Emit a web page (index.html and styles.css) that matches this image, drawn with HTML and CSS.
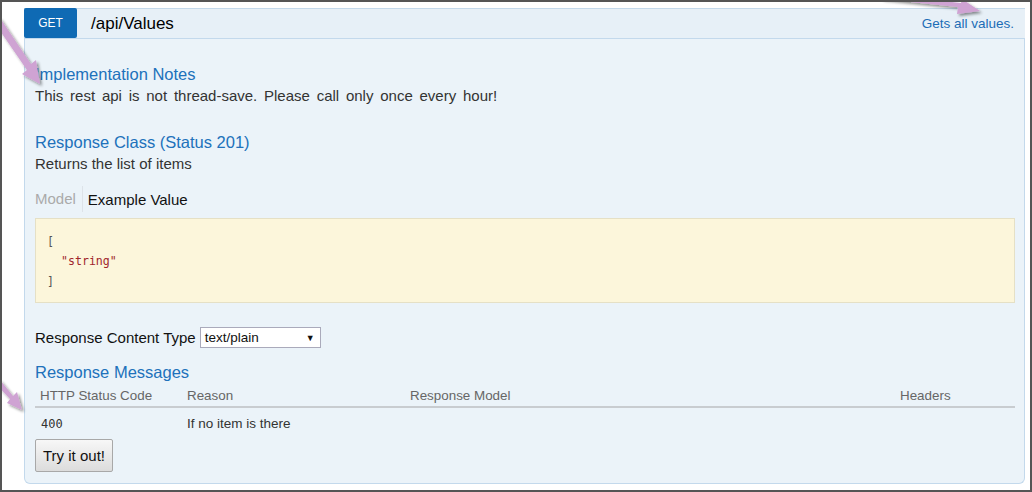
FILE: index.html
```html
<!DOCTYPE html>
<html>
<head>
<meta charset="utf-8">
<link rel="stylesheet" href="styles.css">
</head>
<body>
<div class="frame">
  <div class="op">
    <div class="op-head">
      <span class="verb">GET</span>
      <span class="path">/api/Values</span>
      <span class="summary">Gets all values.</span>
    </div>
    <div class="op-body">
      <h4 class="h-notes">Implementation Notes</h4>
      <p class="txt wide">This rest api is not thread-save. Please call only once every hour!</p>
      <h4 class="h-class">Response Class (Status 201)</h4>
      <p class="txt">Returns the list of items</p>
      <div class="tabs">
        <span class="tab-model">Model</span>
        <span class="tab-example">Example Value</span>
      </div>
      <pre class="code"><span class="pun">[</span>
  <span class="str">"string"</span>
<span class="pun">]</span></pre>
      <div class="ctype">
        <span>Response Content Type</span>
        <span class="select"><span>text/plain</span><span class="caret">▼</span></span>
      </div>
      <h4 class="h-msgs">Response Messages</h4>
      <div class="tbl">
        <div class="tr th">
          <span class="c1">HTTP Status Code</span>
          <span class="c2">Reason</span>
          <span class="c3">Response Model</span>
          <span class="c4">Headers</span>
        </div>
        <div class="tr td">
          <span class="c1 mono">400</span>
          <span class="c2">If no item is there</span>
          <span class="c3"></span>
          <span class="c4"></span>
        </div>
      </div>
      <button class="try">Try it out!</button>
    </div>
  </div>
  <svg class="arrows" width="1032" height="492" viewBox="0 0 1032 492">
    <defs>
      <filter id="sh" x="-20%" y="-20%" width="140%" height="140%">
        <feGaussianBlur in="SourceAlpha" stdDeviation="1.5"/>
        <feOffset dx="2" dy="2" result="b"/>
        <feComponentTransfer><feFuncA type="linear" slope="0.45"/></feComponentTransfer>
        <feMerge><feMergeNode/><feMergeNode in="SourceGraphic"/></feMerge>
      </filter>
    </defs>
    <g fill="#cfa3d3" filter="url(#sh)">
      <polygon points="-6,22 0,18 31,64 36,60 40,84 22,74 27,70"/>
      <polygon points="880,-6 882,-1 958,7 957,14 980,11 962,-1 961,3"/>
      <polygon points="-4,384 0,380 13,396 17,392 22,410 7,403 10,399"/>
    </g>
  </svg>
</div>
</body>
</html>
```
FILE: styles.css
```css
* { box-sizing: border-box; }
html, body { margin: 0; padding: 0; }
body {
  background: #fff;
  font-family: "Liberation Sans", Arial, sans-serif;
  color: #222;
}
.frame {
  position: relative;
  width: 1032px;
  height: 492px;
  border: 2px solid #555;
  padding: 6px 6px 0 22px;
  overflow: hidden;
}
.op {
  width: 1001px;
  height: 476px;
  background: #ebf3f9;
  border: 1px solid #c3d9ec;
  border-top: none;
  border-radius: 0 0 6px 6px;
}
.op-head {
  display: flex;
  align-items: center;
  height: 31px;
  background: #e7f0f7;
  border-top: 1px solid #c3d9ec;
  border-bottom: 1px solid #c3d9ec;
  margin: 0 -1px;
}
.verb {
  display: flex;
  align-items: center;
  justify-content: center;
  width: 53px;
  height: 30px;
  margin-top: -1px;
  background: #0f6ab4;
  color: #fff;
  font-size: 12px;
  border-radius: 2px;
}
.path {
  margin-left: 14px;
  font-size: 17px;
  color: #000;
  flex: 1;
}
.summary {
  font-size: 13.5px;
  color: #1c6db6;
  margin-right: 11px;
}
.op-body {
  padding: 0 9px 0 10px;
}
h4 {
  margin: 0;
  font-size: 16.5px;
  font-weight: normal;
  color: #2071bb;
  line-height: 18px;
}
.h-notes { padding-top: 26px; }
.txt {
  margin: 4px 0 0 0;
  font-size: 15px;
  line-height: 18px;
  color: #333;
}
.txt.wide { word-spacing: 2.6px; }
.h-class { margin-top: 28px; }
.tabs {
  display: flex;
  align-items: center;
  height: 26px;
  margin-top: 13px;
  font-size: 15px;
}
.tab-model {
  color: #aaa;
  padding-right: 6px;
  border-right: 1px solid #dde3e9;
  line-height: 26px;
}
.tab-example {
  padding-left: 5px;
  color: #111;
}
.code {
  margin: 6px 0 0 0;
  height: 85px;
  background: #fcf6db;
  border: 1px solid #e5e0c6;
  padding: 12px 11px;
  font-family: "DejaVu Sans Mono", "Liberation Mono", monospace;
  font-size: 11.6px;
  line-height: 20px;
  color: #555;
}
.code .str { color: #a0262c; }
.ctype {
  display: flex;
  align-items: center;
  margin-top: 24px;
  font-size: 15px;
  color: #111;
}
.select {
  display: flex;
  align-items: center;
  justify-content: space-between;
  margin-left: 4px;
  width: 121px;
  height: 21px;
  background: #fff;
  border: 1px solid #aab;
  padding: 0 5px 0 4px;
  font-size: 13.5px;
}
.caret { font-size: 9px; color: #111; }
.h-msgs { margin-top: 15px; }
.tbl { margin-top: 7px; }
.tr {
  display: flex;
  font-size: 13.4px;
}
.th {
  color: #666;
  height: 20px;
  line-height: 16px;
  border-bottom: 2px solid #c8ccd0;
}
.td {
  height: 28px;
  line-height: 32px;
  font-size: 13.5px;
  color: #333;
}
.c1 { width: 152px; padding-left: 5px; }
.td .c1 { padding-left: 6px; }
.c2 { width: 223px; }
.c3 { width: 490px; }
.c4 { width: 115px; }
.mono { font-family: "DejaVu Sans Mono", "Liberation Mono", monospace; font-size: 12px; }
.try {
  margin-top: 3px;
  width: 78px;
  height: 33px;
  font-family: "Liberation Sans", Arial, sans-serif;
  font-size: 15px;
  color: #111;
  border: 1px solid #a8a8a8;
  border-radius: 2px;
  background: linear-gradient(#f7f7f7, #dcdcdc);
  padding: 0;
}
.arrows {
  position: absolute;
  left: -2px;
  top: -2px;
  pointer-events: none;
}
```
